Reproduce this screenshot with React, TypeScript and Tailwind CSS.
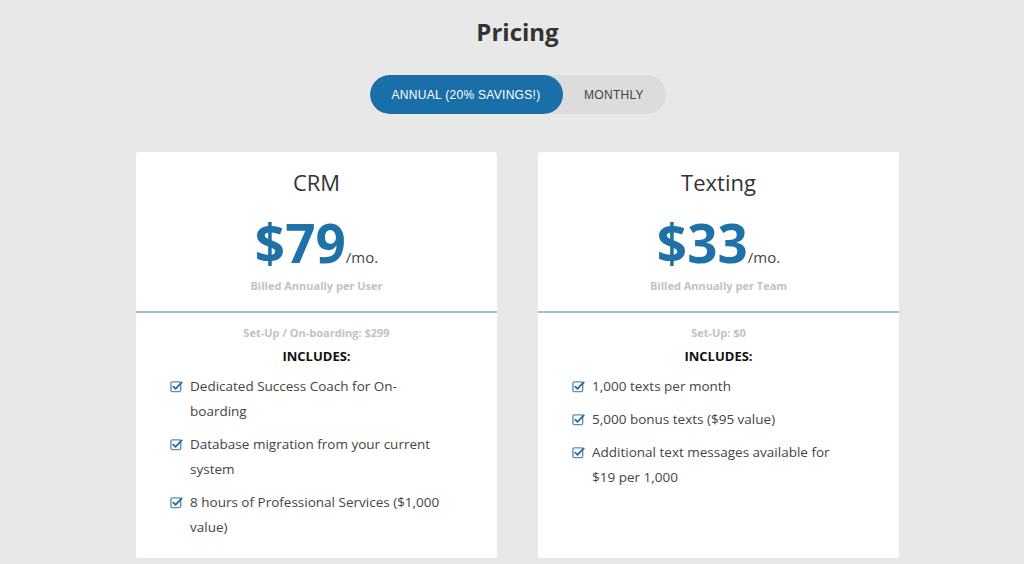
const plans = [
  {
    name: "CRM",
    price: "$79",
    billed: "Billed Annually per User",
    setup: "Set-Up / On-boarding: $299",
    features: [
      "Dedicated Success Coach for On-boarding",
      "Database migration from your current system",
      "8 hours of Professional Services ($1,000 value)",
    ],
  },
  {
    name: "Texting",
    price: "$33",
    billed: "Billed Annually per Team",
    setup: "Set-Up: $0",
    features: [
      "1,000 texts per month",
      "5,000 bonus texts ($95 value)",
      "Additional text messages available for $19 per 1,000",
    ],
  },
];

function CheckSquare() {
  return (
    <svg viewBox="0 0 14 14" className="w-[13px] h-[13px] shrink-0 mt-[6px]" fill="none">
      <rect x="1" y="2" width="10.5" height="10.5" rx="1.5" stroke="#5a90bb" strokeWidth="1.5" />
      <path d="M3.6 7.2l2.3 2.3L12.6 2.6" stroke="#2c6d9f" strokeWidth="2" strokeLinecap="round" strokeLinejoin="round" />
    </svg>
  );
}

export default function App() {
  return (
    <div className="w-[1024px] h-[564px] overflow-hidden bg-[#e8e8e8] pl-[11px] font-['Open_Sans',sans-serif]">
      <h1 className="pt-[14px] text-center text-[24px] leading-[36px] font-bold text-[#333]">Pricing</h1>

      <div className="mt-[25px] flex justify-center">
        <div className="flex h-[39px] rounded-full bg-[#dcdcdc] overflow-hidden font-['Liberation_Sans',Arial,sans-serif] text-[12px] tracking-[0.3px]">
          <button className="w-[193px] rounded-full bg-[#1b6fa9] text-white">ANNUAL (20% SAVINGS!)</button>
          <button className="w-[103px] text-[#444]">MONTHLY</button>
        </div>
      </div>

      <div className="mt-[38px] flex justify-center gap-[41px]">
        {plans.map((plan) => (
          <div key={plan.name} className="w-[361px] h-[406px] bg-white rounded-[3px]">
            <div className="pt-[15px] text-center">
              <h2 className="text-[22px] leading-[30px] text-[#333]">{plan.name}</h2>
              <div className="mt-[19px] flex items-baseline justify-center leading-none">
                <span className="text-[53px] font-bold text-[#1f72a8]">{plan.price}</span>
                <span className="text-[15px] text-[#444]">/mo.</span>
              </div>
              <p className="mt-[9px] text-[11px] leading-[16px] font-bold text-[#c2c2c2]">{plan.billed}</p>
            </div>
            <div className="mt-[17px] border-t-[2px] border-[#9dc3cf]" />
            <div className="pt-[11px] px-[34px]">
              <p className="text-center text-[11px] leading-[18px] font-bold text-[#c2c2c2]">{plan.setup}</p>
              <p className="mt-[5px] text-center text-[13px] leading-[18px] font-bold text-[#111]">INCLUDES:</p>
              <ul className="mt-[9px] mr-[17px] flex flex-col gap-[8px]">
                {plan.features.map((f) => (
                  <li key={f} className="flex gap-[7px] text-[13.5px] leading-[25px] text-[#444]">
                    <CheckSquare />
                    <span>{f}</span>
                  </li>
                ))}
              </ul>
            </div>
          </div>
        ))}
      </div>
    </div>
  );
}
